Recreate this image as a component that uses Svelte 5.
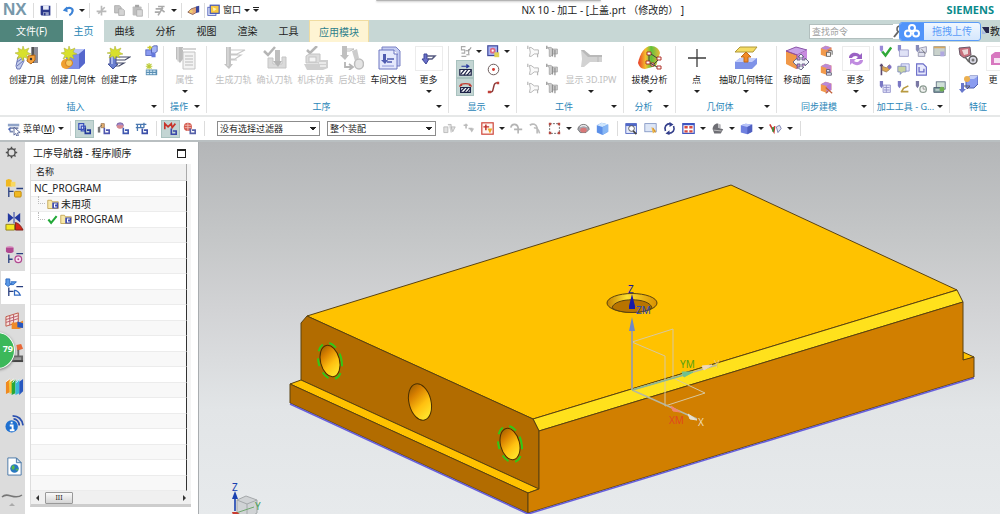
<script>
  const icons = {
    // quick access
    save: '<path d="M2 2h12v12H3l-1-1z" fill="#2d3a8c"/><path d="M5 2h7v5H5z" fill="#e8ecf8"/><path d="M5 10h7v4H5z" fill="#9aa3c8"/><path d="M6 11h2v3H6z" fill="#2d3a8c"/>',
    undo: '<path d="M4 7c4-4 10-2 9 2-.4 2-2 4-4 5" fill="none" stroke="#3b82d6" stroke-width="2.6"/><path d="M1 8l5-5 1 7z" fill="#3b82d6"/>',
    cut: '<path d="M8 2v12M2 9h12M4 12l8-8" stroke="#b9b9b9" stroke-width="2" fill="none"/>',
    copy: '<path d="M2 2h6l2 2v7H2z" fill="#c4c4c4" stroke="#a9a9a9"/><path d="M7 6h5l2 2v6H7z" fill="#d4d4d4" stroke="#a9a9a9"/>',
    paste: '<rect x="2" y="3" width="11" height="11" rx="1" fill="#bdbdbd"/><path d="M5 1h5v3H5z" fill="#a5a5a5"/><path d="M7 7h7v8H7z" fill="#d8d8d8" stroke="#ababab"/>',
    run: '<path d="M5 3h8M2 6h8l-5 8M8 6l5 4M1 10h6M10 2v4" stroke="#aaa" stroke-width="2" fill="none"/>',
    hand: '<path d="M1 10l4-4 6-2 3 1-2 5-5 3z" fill="#e8a878" stroke="#805a50"/><path d="M11 3l4-1v8l-4 1z" fill="#39459a"/><circle cx="5" cy="9" r="2" fill="#f0d070"/>',
    win: '<rect x="1" y="4" width="10" height="10" fill="#dfe4f7" stroke="#4658b8"/><rect x="4" y="1.500" width="11" height="10" fill="#f8c840" stroke="#4658b8" stroke-width="1.500"/><path d="M7 4l5 2-4 3z" fill="#fff2b0"/>',
    // insert
    tool: '<path d="M3 11l5-1 1 5-4 8H2l-1-3z" fill="#c4cdec" stroke="#6c78b8"/><path d="M2 20l6-5M2 16l6-4" stroke="#6c78b8"/><path d="M16 1h7v16h-7z" fill="#8d8d97"/><path d="M17 1h2v16h-2z" fill="#555"/><path d="M13 10l7-1v5l-4 4-4-3z" fill="#f6a23c" stroke="#b86b18"/><circle cx="16" cy="13" r="1.200" fill="#333"/><path d="M8 0l1.500 4L14 2l-2 4 4 2-4.500 1L13 13l-4-2-1 4-2-4-4 2 2-4-4-2 4-1-1-4 4 2z" fill="#d8e02c" stroke="#a8ac30" stroke-width=".5"/>',
    geom: '<path d="M5 8l6-5h13v14l-6 6H5z" fill="#7d8ee8"/><path d="M5 8l6-5h13l-6 5z" fill="#b7c3f8"/><path d="M18 8l6-5v14l-6 6z" fill="#5567cc"/><circle cx="5" cy="18" r="5" fill="#f0a030"/><circle cx="8" cy="17" r="3.500" fill="#f8c860" stroke="#d08020"/><path d="M8 0l1.500 4L14 2l-2 4 4 2-4.500 1L13 13l-4-2-1 4-2-4-4 2 2-4-4-2 4-1-1-4 4 2z" fill="#d8e02c" stroke="#a8ac30" stroke-width=".5"/>',
    oper: '<path d="M3 9h6v9h2l-5 5-5-5h2z" fill="#6a7fd0" stroke="#46559c"/><path d="M4 10h2v8H4z" fill="#aab8ea"/><path d="M9 11h14l-5 3h-9M9 14h8M9 17h8l-5 3H9" fill="none" stroke="#444a68" stroke-width="1.200"/><path d="M8 0l1.500 4L14 2l-2 4 4 2-4.500 1L13 12l-4-2-1 3-2-3-4 2 2-4-4-1 4-1-1-4 4 2z" fill="#d8e02c" stroke="#a8ac30" stroke-width=".5"/>',
    ins1: '<rect x="1" y="6" width="8" height="7" fill="#8a9af0" stroke="#5060b8"/><path d="M8 3l3-2h4v7l-3 2H8z" fill="#a5b4f8" stroke="#4a58a8"/><path d="M6 1v5M3 3h6" stroke="#c8c830" stroke-width="2"/><path d="M8 9l5 1v5H8z" fill="#6478dc"/>',
    ins2: '<path d="M1 8h14v7H1z" fill="#5a8fb4"/><path d="M2 10h12M2 13h12" stroke="#d9edf7" stroke-width="1.500" stroke-dasharray="3 1"/><path d="M5 0v8M1 4h8M2 1l6 6M8 1L2 7" stroke="#bccb3a" stroke-width="1.400"/>',
    // operations
    prop: '<path d="M3 1h7v12l-3 4-4-4z" fill="#bdbdbd"/><path d="M5 1v15" stroke="#e8e8e8"/><path d="M10 6h12v17H10z" fill="#f3f3f3" stroke="#c4c4c4"/><path d="M12 10h8M12 13h8M12 16h8M12 19h8" stroke="#bbb"/><path d="M9 3h14" stroke="#d5d5d5" stroke-width="2"/>',
    gen: '<path d="M4 1h5v17h2l-4 5-5-5h2z" fill="#c3c3c3"/><path d="M6 1v19" stroke="#e4e4e4"/><path d="M9 4h14l-8 4H9M9 9h10l-6 4H9M9 14h6" fill="none" stroke="#c8c8c8" stroke-width="1.200"/>',
    verify: '<path d="M1 5l4 4 7-8" fill="none" stroke="#b5b5b5" stroke-width="2.500"/><path d="M12 4h5v12h-5z" fill="#bfbfbf"/><path d="M5 12h5v6h9v-7h4v11H5z" fill="#dadada" stroke="#c5c5c5"/><path d="M10 15l5 6 4-6z" fill="#b5b5b5"/>',
    sim: '<path d="M3 4l3 3 7-7" fill="none" stroke="#b5b5b5" stroke-width="2.500"/><path d="M2 10l3-2h11v9H2z" fill="#dcdcdc" stroke="#c4c4c4"/><rect x="5" y="11" width="7" height="5" fill="#f4f4f4" stroke="#c4c4c4"/><path d="M0 18h14l2-4h8v8l-5 2H3z" fill="#cfcfcf"/><path d="M15 17h7M16 20h6" stroke="#f2f2f2" stroke-width="1.500"/>',
    post: '<path d="M2 0h5v9h2l-4 5-5-5h2z" fill="#c0c0c0"/><path d="M7 3h7l-4 2H7" fill="none" stroke="#bbb"/><path d="M12 5l5-2 2 9-4 3z" fill="#ccc"/><path d="M5 16v5h7M9 18l4 3-4 3" fill="none" stroke="#b5b5b5" stroke-width="1.800"/><ellipse cx="19" cy="18" rx="4.500" ry="5" fill="#e4e4e4" stroke="#bdbdbd" stroke-width="1.500"/>',
    doc: '<path d="M5 1h14l4 4v15H5z" fill="#c6cdf2" stroke="#7880c4"/><path d="M2 4h15l3 4v15H2z" fill="#e5e9fc" stroke="#6a74c0"/><path d="M17 4v4h4" fill="#fff" stroke="#6a74c0"/><path d="M6 8h3v6h2l-3 4-4-4h2z" fill="#505cb0"/><path d="M10 13h7M10 16h5" stroke="#505cb0" stroke-width="1.500"/><path d="M5 20h12" stroke="#8f98d8"/>',
    moreop: '<path d="M7 7h3v5h2l-3 5-4-5h2z" fill="#6a70c8" stroke="#3d4598"/><path d="M10 9h8l-3 3h-4" fill="none" stroke="#555a80" stroke-width="1.500"/>',
    // display
    d1: '<path d="M8 2H3v4h4v4H3M3 14h6" fill="none" stroke="#aaa" stroke-width="1.300"/><path d="M8 7h4l3-4M12 5v6M9 12h4" fill="none" stroke="#999" stroke-width="1.300"/>',
    d2: '<rect x="1" y="1" width="12" height="12" fill="#a9b3f2" stroke="#404a9c" stroke-width="1.500"/><circle cx="7" cy="7" r="3.500" fill="#e06a80"/><circle cx="7" cy="7" r="1.400" fill="#fff"/><path d="M9 9h6v6H9z" fill="#e0d258"/>',
    d3: '<path d="M1 8h14v7H1z" fill="#fff" stroke="#1e2348" stroke-width="1.500"/><path d="M2 14l5-6M6 15l5-7M10 15l5-6" stroke="#1e2348" stroke-width="1.500"/><path d="M3 4h9M9 2l3 2-3 2" fill="none" stroke="#2a3aa0" stroke-width="1.500"/>',
    d4: '<path d="M2 8h12v6H2z" fill="#fff" stroke="#1e2348" stroke-width="1.500"/><path d="M2 13l5-5M6 14l5-6M10 14l4-5" stroke="#1e2348" stroke-width="1.500"/><path d="M1 7c0-5 14-5 14 0M3 3v3M13 3v3" fill="none" stroke="#c23b30" stroke-width="1.800"/>',
    d5: '<circle cx="8" cy="8" r="6.500" fill="none" stroke="#6a5a5a" stroke-width="1.200"/><circle cx="8" cy="8" r="1.800" fill="#d43a30"/>',
    d6: '<path d="M2 14c5 0 5-1 6-6s2-6 6-6" fill="none" stroke="#8d3a38" stroke-width="1.800"/><path d="M1 12h4v3H1zM12 1h3v3h-3z" fill="#c04038"/>',
    // workpiece
    w1: '<path d="M3 3h2l4 3h5v5H9l-4 3H3l1-5z" fill="#fafafa" stroke="#aaa"/><path d="M1 1v4M13 11v4" stroke="#b5b5b5" stroke-width="1.500"/>',
    w2: '<path d="M2 3h4l3 2h5v6H9l-3 3H4v-8z" fill="#ccc" stroke="#a5a5a5"/><path d="M1 1v4M8 5v9M11 6v9" stroke="#8f8f8f" stroke-width="1.500"/>',
    ipw: '<path d="M2 4h3l6 5h12v7H11l-6 5H2l1-8z" fill="#d2d2d2"/><path d="M2 4h3l6 5h12v2H9z" fill="#b9b9b9"/><path d="M19 9v7" stroke="#b8b8b8"/>',
    // analysis, geometry
    draft: '<defs><linearGradient id="rb"><stop offset="0" stop-color="#e83a28"/><stop offset=".35" stop-color="#f5c02c"/><stop offset=".6" stop-color="#5cc23c"/><stop offset="1" stop-color="#f0b838"/></linearGradient></defs><path d="M0 17C2 7 7 0 13 0c5 0 8 3 9 7l-4 13-11 3c-4 0-6-3-7-6z" fill="url(#rb)"/><path d="M9 6h4v3H9zM8 15h4v3H8zM19 11h4v3h-4zM19 20h4v3h-4zM13 17h3v3h-3z" fill="#fff" stroke="#b03028"/><path d="M11 9v6M13 8l6 4M12 17l7 4M16 18l4-4" stroke="#404040"/>',
    point: '<path d="M12 3v18M3 12h18" stroke="#3c3c3c" stroke-width="1.300"/>',
    extract: '<path d="M6 1h17l-4 5H1z" fill="#f4dc64" stroke="#b09838"/><path d="M1 16l5-4h17v6l-5 5H1z" fill="#7f93e8"/><path d="M1 16l5-4h17l-5 4z" fill="#c3cdfa"/><path d="M12 6l5 5h-3v5h-4v-5H7z" fill="#f08a28" stroke="#c06818"/>',
    // synchronous modelling
    moveface: '<path d="M1 5l10-4 11 3v14l-11 5L1 18z" fill="#f09848"/><path d="M1 5l10-4 11 3-10 5z" fill="#c9a2e8" stroke="#8a58b0"/><path d="M12 9l10-5v14l-10 5z" fill="#c88ae0"/><path d="M1 5l11 4v14" fill="none" stroke="#9a5090"/><path d="M16 8l3 3h-2v3h3v-2l4 4-4 4v-2h-3v3h2l-3 3-4-3h3v-3h-3v2l-4-4 4-4v2h3v-3h-2z" fill="#f4f4fa" stroke="#6a6a88"/>',
    s1: '<path d="M1 4l6-3 7 2v8l-7 3-6-2z" fill="#f29a4c"/><path d="M1 4l6-3 7 2-6 3z" fill="#b98ad8"/><path d="M8 6l6-3v8l-6 3z" fill="#e08860"/><path d="M8 9h5v5H8zM10 7h5v5" fill="#eee" stroke="#555"/>',
    s2: '<path d="M1 4l6-3 7 2v8l-7 3-6-2z" fill="#f29a4c"/><path d="M1 4l6-3 7 2-6 3z" fill="#b98ad8"/><path d="M8 6l6-3v8l-6 3z" fill="#c880d0"/><path d="M8 8h4v3H8zM8 12h6v3H8z" fill="#dde2fa" stroke="#556"/>',
    s3: '<path d="M1 4l6-3 7 2v8l-7 3-6-2z" fill="#f29a4c"/><path d="M1 4l6-3 7 2-6 3z" fill="#b98ad8"/><path d="M8 6l6-3v8l-6 3z" fill="#b478d8"/><path d="M7 8l8 7M10 13l-3 2" stroke="#c06038" stroke-width="1.500"/>',
    moresync: '<path d="M5 11c0-5 7-7 11-3l2-2v6h-6l2-2c-2-2-5-1-6 1z" fill="#9a62c4"/><path d="M19 13c0 5-7 7-11 3l-2 2v-6h6l-2 2c2 2 5 1 6-1z" fill="#c08ce0"/>',
    // machining tools
    m1: '<path d="M1 1h4v5l-2 3-2-3z" fill="#9a8ad8"/><path d="M4 8l4 5 7-10" fill="none" stroke="#2fa838" stroke-width="3"/>',
    m2: '<path d="M1 0h4v6L3 9 1 6z" fill="#8888cc"/><path d="M3 6h11v8H3z" fill="#dfe2f6" stroke="#9a9ac8"/>',
    m3: '<path d="M1 0h4v6L3 9 1 6z" fill="#888cb8"/><path d="M5 4l9-2v7H5zM4 9h8v5H4z" fill="#e0e2ee" stroke="#8c8ca8"/><path d="M8 5l5 6" stroke="#777"/>',
    m4: '<rect x="1" y="2" width="14" height="11" fill="#c9d2cc" stroke="#8c98a0"/><path d="M1 2h14v2H1z" fill="#d8a860"/><path d="M9 8h5v6H9z" fill="#b0a8e0"/>',
    m5: '<path d="M3 1v14M1 3h4" stroke="#5c4a70" stroke-width="2"/><path d="M4 4l5 2 4-4v6l-4 3-5-2z" fill="#e0a850" stroke="#9a7a58"/><circle cx="13" cy="5" r="2.500" fill="#8070c0"/>',
    m6: '<path d="M5 1h10v9H5z" fill="#e4e6fc" stroke="#8890cc"/><path d="M1 4h10v7H7l-3 3v-3H1z" fill="#c8d4a0" stroke="#7a86c0"/>',
    m7: '<path d="M2 1h8l4 4v10H2z" fill="#e8eafc" stroke="#6a6cc8" stroke-width="1.400"/><path d="M5 5v6h6V7" fill="none" stroke="#6a6cc8" stroke-width="1.600"/>',
    m8: '<path d="M1 0h4v6L3 9 1 6z" fill="#7a78c4"/><path d="M5 5h9v9H5z" fill="#e4e4fa" stroke="#8c8cc8"/><path d="M6 8h7M6 11h7M9 5v9" stroke="#8c8cc8"/>',
    m9: '<path d="M1 0h4v6L3 9 1 6z" fill="#7a78c4"/><path d="M5 14l3-5 6-3M5 13h9" fill="none" stroke="#b89a40" stroke-width="2"/>',
    m10: '<path d="M1 0h4v6L3 9 1 6z" fill="#7a78a4"/><circle cx="10" cy="10" r="4" fill="#f0f2f0" stroke="#8a9a90" stroke-width="1.500"/><path d="M10 7v3h3" stroke="#888" fill="none"/>',
    m11: '<rect x="4" y="1" width="11" height="9" fill="#d0e0d8" stroke="#58687c"/><path d="M1 8h12v6H1z" fill="#7a9a9a" stroke="#48586c"/><circle cx="11" cy="10" r="3" fill="#70b050"/><path d="M3 11h5" stroke="#fff"/>',
    f1: '<path d="M1 2l11-1 1 8-7 3-4-3z" fill="#c8707c" stroke="#6a5868"/><path d="M4 4l6-1v5l-4 1z" fill="#ecd8d8"/><circle cx="15" cy="14" r="4" fill="#d8d8e4" stroke="#555" stroke-width="1.500"/><circle cx="15" cy="14" r="1.500" fill="#777"/><path d="M7 11l4 5" fill="none" stroke="#666" stroke-width="1.500"/>',
    f2: '<path d="M8 5l4-3h8v8l-4 4H8z" fill="#8a9cf0" stroke="#5060b0"/><path d="M8 5l4-3h8l-4 3z" fill="#c4cef8"/><circle cx="9" cy="5" r="3" fill="#ecb050"/><path d="M3 9h3v6h2l-4 4-3-4h2z" fill="#6878cc"/><path d="M6 12h6l-3 3" fill="none" stroke="#556"/>',
    f3: '<path d="M3 8l4-3h12v13H3z" fill="#d878c0"/><path d="M6 11h7v5H6z" fill="#f8e4f4"/>',
    // selection bar
    menu: '<rect x="1" y="2" width="13" height="3" fill="#8fa3c8"/><path d="M3 6h10v2H3zM3 10h4v2H3z" fill="#7d8bb0"/><path d="M8 6l7 6-3 .5 1 3-2 .5-1-3-2 2z" fill="#fff" stroke="#4c5a90"/><path d="M1 8l3-2v5z" fill="#4a65b8"/>',
    t1: '<path d="M1 2h6v7H1zM4 5h5v6H4z" fill="#dde3fb" stroke="#3850b8" stroke-width="1.500"/><path d="M9 7v7h6v-4h-4" fill="none" stroke="#233a9a" stroke-width="2"/>',
    t2: '<path d="M1 6h3v7H1z" fill="#777"/><path d="M5 2h4v5H5z" fill="#e4b070" stroke="#a07850"/><path d="M9 7v7h6v-4h-4" fill="none" stroke="#5058b0" stroke-width="2"/><path d="M3 6l3-2" stroke="#555"/>',
    t3: '<ellipse cx="5" cy="4" rx="4" ry="3" fill="#a58ac8" stroke="#705a9c"/><path d="M1 4v2c1 3 7 3 8 0V4" fill="#d88a90"/><path d="M9 7v7h6v-4h-4" fill="none" stroke="#4058b0" stroke-width="2"/>',
    t4: '<path d="M1 3h13M1 7h10M3 3v8M7 3v4M11 1v6" stroke="#4a78b0" stroke-width="1.600"/><path d="M9 8v6h6v-4h-4" fill="none" stroke="#3c50a8" stroke-width="2"/>',
    t5: '<path d="M1 9V2l4 4 4-4 1 5 4-5" fill="none" stroke="#c83228" stroke-width="2"/><path d="M9 8v7h6v-4h-4" fill="none" stroke="#3a48a8" stroke-width="2"/>',
    t6: '<circle cx="6" cy="6" r="5" fill="#d4584c"/><path d="M2 4h8M2 7h8M6 1v10" stroke="#f4c8c0"/><path d="M9 8v6h6v-4h-4" fill="none" stroke="#5560a8" stroke-width="2"/>',
    g1: '<path d="M1 6h5v7H1zM6 3h4v10M10 6h5l-3 6z" fill="#e2e2e2" stroke="#b4b4b4"/>',
    g2: '<path d="M2 4h5M5 2v6M8 8h5" stroke="#bbb" stroke-width="2"/><path d="M9 8h6l-3 5z" fill="#bdbdbd"/>',
    box: '<rect x="1" y="1" width="14" height="14" fill="#fff6f2" stroke="#d0483c" stroke-width="1.500"/><path d="M6 3v7M3 6h7" stroke="#c03028" stroke-width="1.800"/><path d="M8 8h6l-3 6z" fill="#e8a828"/>',
    g3: '<path d="M1 7c1-6 8-5 9 0v7M5 9h10" fill="none" stroke="#b4b4b4" stroke-width="2"/>',
    g4: '<path d="M1 4c4-3 8-1 9 3v7M6 7c4 0 6 2 7 7" fill="none" stroke="#bbb" stroke-width="2"/>',
    dash: '<rect x="2" y="2" width="12" height="12" fill="none" stroke="#555" stroke-dasharray="2.500 1.500"/><path d="M1 1h3v3H1zM12 1h3v3h-3zM1 12h3v3H1zM12 12h3v3h-3z" fill="#b84840"/>',
    dome: '<path d="M1 9c1-8 13-8 14 0l-4 4H4z" fill="#a6a6ae" stroke="#666"/><ellipse cx="8" cy="10" rx="4" ry="3" fill="#d87878"/><path d="M4 6c2-2 6-2 8 0" stroke="#eee" fill="none" stroke-width="1.500"/>',
    cube: '<path d="M1 4l6-3 8 2v9l-7 4-7-3z" fill="#5b8fe8"/><path d="M1 4l6-3 8 2-7 3z" fill="#cfe6fc"/><path d="M8 6l7-3v9l-7 4z" fill="#86b6f4"/>',
    zoom: '<rect x="1" y="2" width="13" height="12" fill="#e4eafc" stroke="#3c54b8"/><path d="M1 2h13v3H1z" fill="#5068c8"/><circle cx="8" cy="8" r="3.500" fill="#fff" stroke="#444"/><path d="M10 11l4 4" stroke="#444" stroke-width="2"/>',
    card: '<rect x="1" y="2" width="14" height="10" fill="#dde6f6" stroke="#7c90c0"/><path d="M9 6l6 5-4 3z" fill="#f0b848"/><path d="M11 7l3 6" stroke="#c88020"/>',
    rotate: '<path d="M3 11C1 6 4 2 9 2M13 5c2 5-1 9-6 9" fill="none" stroke="#35408c" stroke-width="2"/><path d="M8 0l5 3-5 3zM8 10l-5 4 5 2z" fill="#35408c"/>',
    views: '<rect x="1" y="2" width="14" height="12" fill="#fff" stroke="#3c54c0" stroke-width="1.500"/><path d="M1 2h14v2H1z" fill="#3c54c0"/><path d="M3 5h4v3H3zM9 5h4v3H9zM3 10h4v3H3zM9 10h4v3H9z" fill="#d84a40"/>',
    shade: '<path d="M2 9c0-5 4-8 7-7v5l6 2-3 5H4z" fill="#6e6e74"/><path d="M9 2l3 1v5l-3-1z" fill="#b8b8bc"/><path d="M3 10l10 1" stroke="#ccc"/>',
    solid: '<path d="M1 4l6-2 8 1v9l-6 3-8-2z" fill="#6f80e0"/><path d="M1 4l6-2 8 1-6 3z" fill="#b8c4f8"/><path d="M9 6l6-3v9l-6 3z" fill="#5060c0"/>',
    orient: '<path d="M1 3l5 9 1-7" fill="none" stroke="#c83c34" stroke-width="2"/><path d="M5 12V6" stroke="#2a9a3c" stroke-width="2"/><path d="M9 6l4-2 2 4-4 5z" fill="#e4e4f2" stroke="#6870a8"/>',
    // resource bar
    gear: '<circle cx="8" cy="8" r="4.500" fill="none" stroke="#505050" stroke-width="1.800"/><path d="M8 1v3M8 12v3M1 8h3M12 8h3M3 3l2 2M11 11l2 2M13 3l-2 2M5 11l-2 2" stroke="#505050" stroke-width="1.800"/>',
    r1: '<path d="M1 1l3-1 3 1v7H1z" fill="#f0b820"/><path d="M6 3h5v5H6z" fill="#f8d860"/><path d="M4 9v10M4 13h5M12 10h7" stroke="#2a4080" stroke-width="1.400"/><rect x="10" y="13" width="7" height="6" rx="1" fill="#f0b820" stroke="#c08a10"/>',
    r2: '<path d="M3 1l6 5-6 5zM16 1l-6 5 6 5z" fill="#2338a0"/><path d="M9.500 0v12" stroke="#2338a0"/><path d="M1 13h9v6H1z" fill="#f4e820" stroke="#908020"/><path d="M11 11c4 1 6 4 8 8h-8z" fill="#d82818" stroke="#802018"/>',
    r3: '<ellipse cx="5" cy="3" rx="4" ry="2" fill="#d890c0"/><path d="M1 3v4c1 2 7 2 8 0V3z" fill="#b04890"/><path d="M4 10v9M4 15h4M12 9h7" stroke="#2a4080" stroke-width="1.400"/><circle cx="14" cy="15" r="3.500" fill="#f8e0f0" stroke="#b04890" stroke-width="1.300"/><circle cx="14" cy="15" r="1" fill="#b04890"/>',
    r4: '<path d="M1 1h4v5h2L3 9 0 6h1zM6 4h6l-3 3H6" fill="#5a9ae8" stroke="#2c68c0"/><path d="M4 10v9M4 14h5M12 9h7" stroke="#2a4080" stroke-width="1.400"/><path d="M10 13c4 0 5 3 6 5h-6z" fill="#fff" stroke="#3068c0" stroke-width="1.300"/>',
    r5: '<path d="M1 6l13-4v10L1 16z" fill="#f6e2dc" stroke="#c05848"/><path d="M1 9l13-4M1 12l13-4M5 5v10M9 4v10" stroke="#b85868"/><path d="M7 12h8l4-2v7l-4 2H7z" fill="#f08a28"/><path d="M13 11l6 2v5l-6-1z" fill="#2858c0"/>',
    r6: '<path d="M12 1l5-1 2 5-6 2z" fill="#e86838"/><path d="M14 6v8M9 13h9v5H7z" stroke="#666" stroke-width="2" fill="#999"/><path d="M5 18h14" stroke="#444" stroke-width="2"/>',
    r7: '<path d="M1 5l4-3v14l-4 2z" fill="#f08a20"/><path d="M4 5l4-3v14l-3 2z" fill="#f4c830"/><path d="M7 5l4-3v15l-4 2z" fill="#28a838"/><path d="M11 5l4-3v15l-4 2z" fill="#38b8d8"/><path d="M15 5l4-3v13l-4 4z" fill="#2858c0"/><path d="M1 5l4-3M5 5l4-3M8 6l3-4M12 6l3-4" stroke="#f4f8f8"/>',
    r8: '<circle cx="7" cy="12" r="6.500" fill="#1f70d0"/><path d="M7 7v2M5 11h3v5M5 16h5" stroke="#fff" stroke-width="2" fill="none"/><path d="M9 4c3 0 6 3 6 7M8 1c6 0 10 4 11 10" fill="none" stroke="#2a50b0" stroke-width="1.800"/>',
    r9: '<path d="M3 1h9l5 5v13H3z" fill="#fff" stroke="#4a78a8"/><path d="M12 1v5h5z" fill="#cfe0f0" stroke="#4a78a8"/><circle cx="10" cy="12" r="4.500" fill="#2878c0"/><path d="M7 10c2-3 4 0 3 2s-2 2-3 0zM11 13l3-1-1 3z" fill="#58b848"/>',
    folder: '<path d="M1 3h5l1 2h8v9H1z" fill="#f8e8a8" stroke="#b89840"/><path d="M7 6h8v8H7z" fill="#3c4ab0"/><path d="M13 8h-3v4h3" fill="none" stroke="#fff" stroke-width="1.400"/>',
    tick: '<path d="M2 8l4 5 8-10" fill="none" stroke="#22a838" stroke-width="3"/>'
  }

  const quick = ['save', '|', 'undo', 'v', '|', 'cut', 'copy', 'paste', '|', 'run', 'v', '|', 'hand', '|']
  const tabs = ['主页', '曲线', '分析', '视图', '渲染', '工具']

  const groups = [
    { name: '插入', cls: 'insert', items: [
      { icon: 'tool', label: '创建刀具' },
      { icon: 'geom', label: '创建几何体' },
      { icon: 'oper', label: '创建工序' },
      { grid: ['ins1', 'ins2'], cols: 1 }
    ] },
    { name: '操作', cls: 'action', items: [{ icon: 'prop', label: '属性', off: true, drop: true }] },
    { name: '工序', cls: 'operation', items: [
      { icon: 'gen', label: '生成刀轨', off: true },
      { icon: 'verify', label: '确认刀轨', off: true },
      { icon: 'sim', label: '机床仿真', off: true },
      { icon: 'post', label: '后处理', off: true },
      { icon: 'doc', label: '车间文档' },
      { icon: 'moreop', label: '更多', drop: true, framed: true }
    ] },
    { name: '显示', cls: 'display', items: [
      { grid: ['d1', 'v', 'd2', 'v', 'd3', '', 'd5', '', 'd4', '', 'd6', ''], cols: 4 }
    ] },
    { name: '工件', cls: 'piece', items: [
      { grid: ['w1', 'w2', 'w1', 'w2', 'w1', 'w2'], cols: 2 },
      { icon: 'ipw', label: '显示 3D.IPW', off: true, drop: true }
    ] },
    { name: '分析', cls: 'analysis', items: [{ icon: 'draft', label: '拔模分析', drop: true }] },
    { name: '几何体', cls: 'geometry', items: [
      { icon: 'point', label: '点', drop: true },
      { icon: 'extract', label: '抽取几何特征', drop: true }
    ] },
    { name: '同步建模', cls: 'sync', items: [
      { icon: 'moveface', label: '移动面' },
      { grid: ['s1', 's2', 's3'], cols: 1 },
      { icon: 'moresync', label: '更多', drop: true, framed: true }
    ] },
    { name: '加工工具 - G...', cls: 'machining', items: [
      { grid: ['m1', 'm2', 'm3', 'm4', 'm5', 'm6', 'm7', '', 'm8', 'm9', 'm10', 'm11'], cols: 4 }
    ] },
    { name: '特征', cls: 'feature', items: [
      { grid: ['f1', 'f2'], cols: 1 },
      { icon: 'f3', label: '更', framed: true }
    ] }
  ]

  const pressed = ['d3', 'd4', 't1', 't5']
  const barLeft = ['t1', 't2', 't3', 't4', '|', 't5', 't6', '|']
  const barRight = ['g1', 'g2', 'box', 'v', 'g3', 'g4', 'dash', 'v', 'dome', 'cube', '|',
    'zoom', 'card', 'rotate', 'views', 'v', 'shade', 'v', 'solid', 'v', 'orient', 'v', '|']

  const resources = ['r1', 'r2', 'r3', 'r4', 'r5', 'r6', 'r7', 'r8', 'r9']
  const blankRows = Array(17)

  let activeTab = $state('主页')
  let activeResource = $state('r4')
</script>

{#snippet pic(name, size, box = 16)}
  <svg class="pic" width={size} height={size} viewBox="0 0 {box} {box}" aria-hidden="true">{@html icons[name]}</svg>
{/snippet}

{#snippet strip(list)}
  {#each list as item}
    {#if item === '|'}
      <span class="sep"></span>
    {:else if item === 'v'}
      <button class="drop" aria-label="更多选项"><i class="caret"></i></button>
    {:else}
      <button class="tiny" class:pressed={pressed.includes(item)} aria-label={item}>{@render pic(item, 13)}</button>
    {/if}
  {/each}
{/snippet}

<div class="app">
  <header class="title">
    <span class="nx">NX</span>
    <span class="sep"></span>
    {@render strip(quick)}
    <button class="window">{@render pic('win', 13)}窗口<i class="caret"></i><i class="caret bar"></i></button>
    <h1>NX 10 - 加工 - [上盖.prt （修改的） ]</h1>
    <span class="brand">SIEMENS</span>
    <span class="notch"></span>
  </header>

  <nav class="tabs">
    <button class="file">文件(F)</button>
    {#each tabs as t}
      <button class="tab" class:active={activeTab === t} onclick={() => (activeTab = t)}>{t}</button>
    {/each}
    <button class="tab module">应用模块</button>
    <input class="search" type="text" placeholder="查找命令" aria-label="查找命令" />
    <svg class="lens" width="12" height="15" viewBox="0 0 12 15" aria-hidden="true">
      <circle cx="7" cy="5" r="3" fill="none" stroke="#666" stroke-width="1.500" /><path d="M5 8l-4 5M8 9l3 4" stroke="#666" stroke-width="2" />
    </svg>
    <button class="tutor">
      <svg width="9" height="10" viewBox="0 0 9 10" aria-hidden="true"><path d="M1 1h7v6H5z" fill="#26264c" /><path d="M1 4l4 4H1z" fill="#a8b8e0" /></svg>教
    </button>
    <button class="upload">
      <svg width="24" height="19" viewBox="0 0 24 19" aria-hidden="true">
        <g fill="none" stroke="#fff" stroke-width="2"><circle cx="12" cy="6" r="3" /><circle cx="8" cy="11.500" r="3" /><circle cx="16" cy="11.500" r="3" /></g>
      </svg>
      <span>拖拽上传</span>
    </button>
  </nav>

  <section class="ribbon">
    {#each groups as g}
      <div class="group {g.cls}">
        <div class="items">
          {#each g.items as it}
            {#if it.grid}
              <div class="grid cols{it.cols}">
                {#each it.grid as cell}
                  {#if cell === 'v'}
                    <button class="cell" aria-label="更多选项"><i class="caret"></i></button>
                  {:else if cell}
                    <button class="cell" class:pressed={pressed.includes(cell)} aria-label={cell}>
                      {#if g.cls === 'feature'}{@render pic(cell, 20, 20)}{:else}{@render pic(cell, 13)}{/if}
                    </button>
                  {:else}
                    <span></span>
                  {/if}
                {/each}
              </div>
            {:else}
              <button class="big" class:framed={it.framed} disabled={it.off}>
                <span class="art">{@render pic(it.icon, 24, 24)}</span>
                <span class="label">{it.label}</span>
                {#if it.drop}<i class="caret"></i>{/if}
              </button>
            {/if}
          {/each}
        </div>
        <div class="foot"><span>{g.name}</span>{#if g.cls !== 'feature'}<i class="caret"></i>{/if}</div>
      </div>
    {/each}
  </section>

  <section class="selbar">
    <button class="menu">{@render pic('menu', 14)}菜单(<u>M</u>)<i class="caret"></i></button>
    <span class="sep"></span>
    {@render strip(barLeft)}
    <select class="filter" aria-label="类型过滤器"><option>没有选择过滤器</option></select>
    <select class="scope" aria-label="选择范围"><option>整个装配</option></select>
    {@render strip(barRight)}
  </section>

  <main>
    <aside class="resources">
      <button class="gear" aria-label="设置">{@render pic('gear', 13)}</button>
      {#each resources as r}
        <button class="res" class:on={activeResource === r} aria-label={r} onclick={() => (activeResource = r)}>
          {@render pic(r, 19, 20)}
        </button>
      {/each}
      <svg class="pic wave" width="24" height="22" viewBox="0 0 24 22" aria-hidden="true">
        <path d="M2 6c6-6 12 4 20-2" fill="none" stroke="#777" stroke-width="1.500" /><path d="M9 15l3-3 3 3z" fill="#aaa" />
      </svg>
      <span class="score">79</span>
    </aside>

    <section class="navigator">
      <h2>工序导航器 - 程序顺序<button class="max" aria-label="最大化"></button></h2>
      <div class="tree">
        <table>
          <thead><tr><th>名称</th></tr></thead>
          <tbody>
            <tr><td>NC_PROGRAM</td></tr>
            <tr><td><div class="node"><i class="branch"></i>{@render pic('folder', 12)}未用项</div></td></tr>
            <tr><td><div class="node"><i class="branch"></i>{@render pic('tick', 11)}{@render pic('folder', 12)}PROGRAM</div></td></tr>
            {#each blankRows as _}
              <tr><td></td></tr>
            {/each}
          </tbody>
        </table>
        <div class="hscroll"><i class="left"></i><span class="thumb">III</span><i class="right"></i></div>
      </div>
    </section>

    <section class="canvas">
      <svg viewBox="199 140 801 374" preserveAspectRatio="xMidYMid slice">
        <defs>
          <linearGradient id="bore" x1="0" y1="0" x2=".35" y2="1">
            <stop offset="0" stop-color="#8f5500" /><stop offset=".35" stop-color="#d88000" />
            <stop offset=".7" stop-color="#ffc010" /><stop offset="1" stop-color="#ffdf28" />
          </linearGradient>
          <linearGradient id="sink">
            <stop offset="0" stop-color="#c88400" /><stop offset=".4" stop-color="#ffe030" /><stop offset="1" stop-color="#d89000" />
          </linearGradient>
        </defs>

        <g stroke="#5a4210" stroke-linejoin="round">
          <path d="M307 315L731 184 957 289 533 418z" fill="#ffc200" />
          <path d="M533 418L957 289 963 301 539 430z" fill="#ffe11c" />
          <path d="M301 322L307 315 533 418 539 430V488L301 379z" fill="#b26c00" />
          <path d="M290 383L301 379 539 488 528 492z" fill="#ffc200" />
          <path d="M290 383L528 492V512L290 402z" fill="#b26c00" />
          <path d="M963 351L974 356 963 360z" fill="#ffc200" />
          <path d="M539 430L963 301V359L974 356V376L528 512V492L539 488z" fill="#d17f00" />
        </g>
        <path d="M290 403L528 513 974 377" fill="none" stroke="#6860dc" stroke-width="1.600" />

        <g fill="url(#bore)" stroke="#4a3000">
          <ellipse cx="330" cy="360" rx="9.500" ry="16" transform="rotate(-14 330 360)" />
          <ellipse cx="420" cy="401" rx="11" ry="18.500" transform="rotate(-14 420 401)" />
          <ellipse cx="510" cy="443" rx="9.500" ry="16" transform="rotate(-14 510 443)" />
        </g>
        <g fill="none" stroke="#32c818" stroke-width="2" stroke-dasharray="8 7">
          <ellipse cx="330" cy="360" rx="11.500" ry="18.500" transform="rotate(-14 330 360)" />
          <ellipse cx="510" cy="443" rx="11.500" ry="18.500" transform="rotate(-14 510 443)" />
        </g>

        <ellipse cx="632" cy="302" rx="25" ry="9.500" fill="url(#sink)" stroke="#5a4210" />
        <path d="M612 307c2-11 38-11 40 0-8 6-32 6-40 0z" fill="#b87400" stroke="#5a4210" />

        <g fill="none" stroke="#d8c8a0">
          <path d="M632 341L673 328V377L705 392 665 405V355z" />
          <path d="M632 389L717 364M632 389L697 418" stroke="#b8b8a0" stroke-width="1.500" />
          <path d="M632 389V330" stroke="#a8a090" stroke-width="2" />
          <path d="M632 389L684 374" stroke="#8cb890" stroke-width="1.500" />
        </g>
        <path d="M632 293L635 305V308H629V305z" fill="#1818a8" />
        <path d="M632 316L635 330H629z" fill="#7088c8" />
        <path d="M693 371L682 371 684 376z" fill="#70c090" stroke="#70c090" />
        <path d="M712 364L702 365 704 369z" fill="#f0d8b8" stroke="#f0d8b8" />
        <path d="M680 411L671 405 673 410z" fill="#f08870" stroke="#f08870" />
        <path d="M697 419L688 413 690 418z" fill="#e8e0d0" stroke="#e8e0d0" />
        <g class="axes">
          <text x="628" y="292" fill="#1a1a9c">Z</text>
          <text x="636" y="313" fill="#3048b0">ZM</text>
          <text x="680" y="367" fill="#58a010">YM</text>
          <text x="714" y="367" fill="#e8c878">Y</text>
          <text x="669" y="423" fill="#e04820">XM</text>
          <text x="698" y="425" fill="#f0dcb8">X</text>
        </g>

        <path d="M237 499L246 495 257 499V512L247 518 237 514z" fill="#d0d3d5" stroke="#a4a8aa" />
        <path d="M237 499L247 503 257 499M247 503V518" fill="none" stroke="#a4a8aa" />
        <path d="M236 512L254 506" stroke="#70a870" />
        <path d="M235 510V496" stroke="#1840b0" stroke-width="1.600" />
        <path d="M235 490L238 498H232z" fill="#1840b0" />
        <path d="M232 511h5l4 3h-8z" fill="#c83c30" />
        <g class="axes">
          <text x="232" y="490" fill="#1840b0">Z</text>
          <text x="255" y="509" fill="#48a058">Y</text>
        </g>
      </svg>
    </section>
  </main>
</div>

<style>
  :global(body) { background: #fff; }

  .app {
    display: flex;
    flex-direction: column;
    height: 100vh;
    overflow: hidden;
    color: #222;
    font: 9px/12px "Noto Sans", "Noto Sans CJK SC", sans-serif;
  }
  button, input, select {
    font: inherit;
    color: inherit;
    border: 0;
    padding: 0;
    background: none;
    box-sizing: border-box;
  }
  button { flex: none; white-space: nowrap; }
  .pic { display: block; flex: none; }

  .caret {
    display: inline-block;
    border: 3px solid transparent;
    border-top: 3px solid #222;
    border-bottom: 0;
  }
  .caret.bar { position: relative; }
  .caret.bar::before {
    content: "";
    position: absolute;
    left: -3px;
    top: -5px;
    width: 6px;
    height: 1px;
    background: #222;
  }
  .sep {
    flex: none;
    width: 1px;
    height: 15px;
    margin: 0 4px 0 5px;
    background: #dcdcdc;
  }
  .tiny {
    display: flex;
    align-items: center;
    justify-content: center;
    width: 19px;
    height: 18px;
  }
  .drop {
    display: flex;
    align-items: center;
    justify-content: center;
    width: 10px;
    height: 18px;
  }
  .pressed { background: #c3d5d3; box-shadow: inset 0 0 0 1px #a9c2bf; }

  /* title bar */
  .title {
    position: relative;
    display: flex;
    align-items: center;
    height: 20px;
    flex: none;
  }
  .title .sep { margin: 0 2px; }
  .title .tiny { width: 18px; }
  .nx {
    width: 29px;
    box-sizing: border-box;
    padding-left: 3px;
    margin-right: 2px;
    color: #7798aa;
    font: bold 17px/20px "Liberation Sans", sans-serif;
  }
  .window { display: flex; align-items: center; gap: 3px; }
  h1 {
    flex: 1;
    margin: 0;
    text-align: center;
    font-size: 10px;
    font-weight: normal;
    white-space: nowrap;
  }
  .brand {
    margin-right: 6px;
    color: #0a8a8c;
    font: bold 11px/20px "Open Sans", sans-serif;
  }
  .notch {
    position: absolute;
    top: 0;
    left: 376px;
    width: 225px;
    height: 1px;
    border-radius: 0 0 3px 3px;
    background: #b4b4b4;
    box-shadow: 0 1px 2px #bbb;
  }

  /* tabs */
  .tabs {
    position: relative;
    display: flex;
    align-items: stretch;
    height: 22px;
    flex: none;
    background: #c7d7d5;
    font-size: 10px;
    overflow: hidden;
  }
  .file { width: 63px; background: #50857c; color: #fff; }
  .tab { width: 41px; }
  .tab.active { background: #fff; color: #2585b4; }
  .module {
    width: 60px;
    background: #fef4d3;
    border: 1px solid #f0dca0;
    border-bottom: 0;
    color: #2f7f8c;
  }
  .search {
    width: 84px;
    height: 15px;
    margin: 4px 0 0 auto;
    padding: 0 2px;
    border: 1px solid #b2bfbe;
    border-right: 0;
    background: #fff;
    font-size: 9px;
  }
  .search::placeholder { color: #a0a0a0; }
  .lens { flex: none; margin-top: 4px; background: #fff; }
  .tutor {
    display: flex;
    align-items: center;
    margin-left: 76px;
  }
  .tutor svg { flex: none; }
  .upload {
    position: absolute;
    right: 19px;
    top: 2px;
    display: flex;
    width: 82px;
    height: 19px;
    border: 1px solid #5b9cf8;
    border-radius: 3px;
    overflow: hidden;
    background: linear-gradient(#f0f7ff, #d5e7fd);
    color: #5b9cf8;
    line-height: 17px;
  }
  .upload svg { flex: none; margin-top: -1px; background: #5094fa; }
  .upload span { flex: 1; }

  /* ribbon */
  .ribbon {
    display: flex;
    flex: none;
    height: 73px;
    overflow: hidden;
    border-bottom: 2px solid #e6e8e8;
  }
  .group {
    display: flex;
    flex: none;
    flex-direction: column;
    box-sizing: border-box;
    margin: 4px 0 2px;
    border-right: 1px solid #e2e2e2;
  }
  .items { display: flex; height: 54px; }
  .foot {
    display: flex;
    align-items: center;
    height: 13px;
    padding-right: 6px;
    color: #2b86b8;
    white-space: nowrap;
  }
  .foot span { flex: 1; text-align: center; }
  .big {
    display: flex;
    flex-direction: column;
    align-items: center;
    width: 41px;
    height: 54px;
  }
  .big .art { height: 28px; }
  .big .label { height: 13px; }
  .big .caret { margin-top: 3px; }
  .big:disabled { color: #c0c0c0; }
  .big.framed { width: 29px; }
  .framed .art {
    width: 28px;
    height: 25px;
    padding: 0 1px;
    margin-bottom: 3px;
    border: 1px solid #ececec;
    box-sizing: border-box;
  }
  .grid {
    display: grid;
    grid-auto-rows: 18px;
    align-content: start;
    margin-top: -4px;
  }
  .cols1 { grid-template-columns: 18px; }
  .cols2 { grid-template-columns: 19px 19px; }
  .cols4 { grid-template-columns: repeat(4, 18px); }
  .cell { display: flex; align-items: center; justify-content: center; }

  .insert { width: 164px; }
  .insert .items { padding-left: 4px; }
  .insert .big { width: 46px; }
  .action { width: 43px; }
  .operation { width: 242px; }
  .operation .items { padding-left: 6px; }
  .operation .framed { margin-left: 5px; }
  .operation .big:nth-child(4) { width: 32px; }
  .display { width: 68px; }
  .display .items { padding-left: 7px; }
  .display .cols4 { grid-template-columns: 18px 10px 18px 10px; }
  .piece { width: 107px; }
  .piece .items { padding-left: 7px; }
  .piece .big { width: 58px; }
  .analysis { width: 52px; }
  .analysis .big { width: 51px; }
  .geometry { width: 101px; }
  .geometry .big:last-child { width: 58px; }
  .sync { width: 97px; }
  .sync .big:first-child { width: 40px; }
  .sync .framed { margin-left: 6px; }
  .machining { width: 76px; }
  .machining .items { padding-left: 2px; }
  .feature { width: 50px; border-right: 0; }
  .feature .grid { grid-template-columns: 36px; grid-auto-rows: 28px; }
  .feature .big.framed { width: 14px; }
  .feature .art { width: 14px; overflow: hidden; border-right: 0; }
  .feature .foot { padding: 0 0 0 6px; }

  /* selection bar */
  .selbar {
    display: flex;
    flex: none;
    align-items: center;
    height: 25px;
    box-sizing: border-box;
    border-bottom: 2px solid #b9bfc1;
  }
  .menu {
    display: flex;
    align-items: center;
    width: 65px;
    padding-left: 7px;
  }
  .menu .pic { margin-right: 2px; }
  .menu .caret { margin-left: 3px; }
  select {
    appearance: none;
    height: 15px;
    padding: 0 12px 0 2px;
    border: 1px solid #8c8c8c;
    background:
      linear-gradient(to bottom right, #222 50%, transparent 50%) right 3px center / 3px 4px no-repeat,
      linear-gradient(to bottom left, #222 50%, transparent 50%) right 6px center / 3px 4px no-repeat,
      #fff;
  }
  .filter { width: 103px; margin: 0 7px 0 8px; }
  .scope { width: 109px; margin-right: 4px; }

  main { display: flex; flex: 1; min-height: 0; }

  /* resource bar */
  .resources {
    position: relative;
    display: flex;
    flex-direction: column;
    width: 25px;
    flex: none;
    background: #dcdcdc;
    overflow: hidden;
  }
  .gear { height: 20px; margin-bottom: 10px; padding-left: 5px; }
  .res {
    height: 33px;
    padding-left: 5px;
  }
  .res.on { margin-left: 1px; padding-left: 4px; background: #fff; }
  .res:nth-child(n + 9) { height: 42px; }
  .wave { margin-top: 4px; }
  .score {
    position: absolute;
    left: -20px;
    top: 190px;
    width: 32px;
    height: 35px;
    padding-right: 1px;
    border: 1px solid #fff;
    border-radius: 50%;
    background: #3cb85a;
    box-shadow: 0 1px 3px #777;
    color: #fff;
    text-align: right;
    line-height: 32px;
    font-weight: bold;
  }

  /* navigator */
  .navigator {
    display: flex;
    flex-direction: column;
    width: 174px;
    flex: none;
    box-sizing: border-box;
    padding: 0 7px 7px 5px;
    border-right: 1px solid #a9adb0;
  }
  h2 {
    display: flex;
    align-items: center;
    justify-content: space-between;
    height: 22px;
    flex: none;
    margin: 0;
    padding: 0 5px 0 3px;
    font-size: 10px;
    font-weight: normal;
  }
  .max { width: 9px; height: 9px; border: 1px solid #222; border-top-width: 2px; }
  .tree {
    display: flex;
    flex: 1;
    flex-direction: column;
    min-height: 0;
    border-bottom: 3px solid #cdcdcd;
    border-left: 1px solid #ddd;
  }
  table {
    flex: 1;
    width: 100%;
    border-spacing: 0;
    border-right: 4px solid #f4f4f4;
  }
  th, td { box-sizing: border-box; padding: 0 0 0 3px; line-height: 12px; text-align: left; }
  th {
    height: 17px;
    padding-left: 5px;
    background: #f0f0f0;
    font-weight: normal;
    border-bottom: 1px solid #dcdcdc;
    border-right: 1px solid #aaa;
  }
  td {
    height: 15px;
    border-bottom: 1px solid #ececec;
    border-right: 1px solid #333;
    font-size: 10px;
  }
  tbody tr:nth-child(even) { background: #f8f8f8; }
  .node {
    display: flex;
    align-items: center;
    gap: 2px;
    height: 12px;
    padding-left: 4px;
  }
  .branch {
    width: 6px;
    height: 7px;
    margin-bottom: 7px;
    border-left: 1px dotted #bbb;
    border-bottom: 1px dotted #bbb;
  }
  .hscroll {
    display: flex;
    align-items: center;
    height: 13px;
    flex: none;
    padding: 0 5px;
    background: #f0f0f0;
  }
  .hscroll i { border: 3px solid transparent; }
  .hscroll .left { border-left: 0; border-right-color: #333; }
  .hscroll .right { margin-left: auto; border-right: 0; border-left-color: #333; }
  .thumb {
    width: 26px;
    height: 10px;
    margin-left: 6px;
    border: 1px solid #999;
    border-radius: 1px;
    background: linear-gradient(#fafafa, #d4d4d4);
    font-size: 7px;
    line-height: 10px;
    text-align: center;
  }

  .canvas {
    flex: 1;
    min-width: 0;
    background: linear-gradient(#b4b6b8, #c4c6c7 25%, #d2d3d5 45%, #e2e5e7 72%, #e7eaec);
  }
  .canvas svg { display: block; width: 100%; height: 100%; }
  .axes { font: 10px "Noto Sans", sans-serif; }
</style>
